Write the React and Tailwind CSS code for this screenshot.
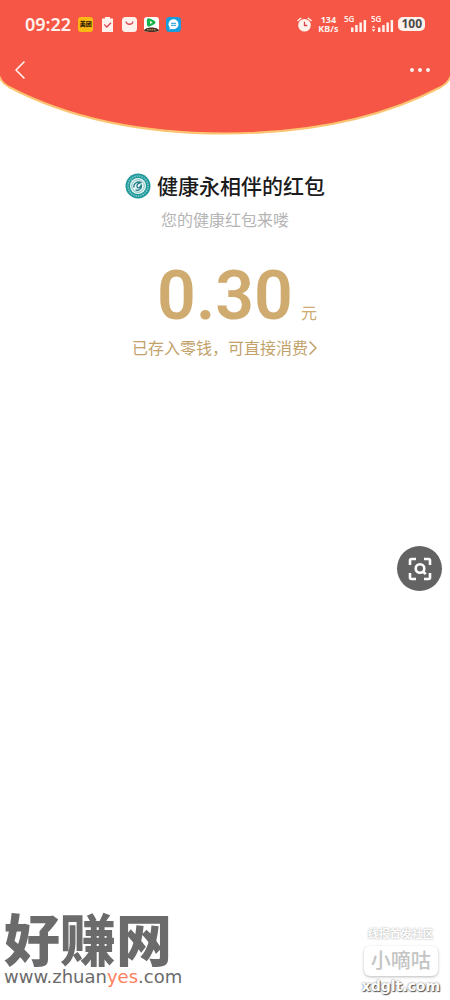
import React from 'react';
import { ChevronLeft } from 'lucide-react';

const MeituanIcon = () => (
  <span className="w-[15px] h-[15px] rounded-[3px] bg-[#fdb913] text-[#332200] text-[6px] leading-[15px] font-black text-center">
    美团
  </span>
);

const TaskIcon = () => (
  <svg className="w-[15px] h-[15px]" viewBox="0 0 15 15" fill="none" aria-hidden="true">
    <path d="M2 1.5h3V0h5v1.5h3V15H2z" fill="#fff1ec" />
    <path d="M4.2 7.4 6.8 10 11 5.8" stroke="#d8454f" strokeWidth="1.3" />
  </svg>
);

const BagIcon = () => (
  <svg className="w-[15px] h-[15px]" viewBox="0 0 15 15" fill="none" aria-hidden="true">
    <rect width="15" height="15" rx="3.5" fill="#fff1ec" />
    <path d="M4.2 5c.4 3 6.2 3 6.6 0" stroke="#d8454f" strokeWidth="1.3" strokeLinecap="round" />
  </svg>
);

const VideoIcon = () => (
  <svg className="w-[15px] h-[15px]" viewBox="0 0 15 15" aria-hidden="true">
    <rect width="15" height="15" rx="3" fill="#fff" />
    <path d="M4.6 1.2c-1.4-.3-1.8.8-1.7 3.8.1 2.8 0 4.9 1.7 4.6C6.5 9.2 11.3 7 11.6 5.4 11.7 3.9 6.5 1.5 4.6 1.2z" fill="#15b34a" />
    <path d="M6 3.8v3.2l2.7-1.6z" fill="#e9ffe9" />
    <path d="M0 13.5C1 9.5 14 9.5 15 13.5c-1 2-14 2-15 0z" fill="#4b3022" />
    <path d="M3 12.8h9" stroke="#d5b07e" strokeWidth="1" strokeDasharray="1.5 .8" />
  </svg>
);

const ChatIcon = () => (
  <svg className="w-[15px] h-[15px]" viewBox="0 0 15 15" aria-hidden="true">
    <rect width="15" height="15" rx="3.5" fill="#189cdb" />
    <circle cx="7.5" cy="7.3" r="5" fill="#fff" />
    <path d="M4 9.5 3.4 12.6 7 11.5z" fill="#fff" />
    <path d="M5 6.3h5M5 8.3h5" stroke="#189cdb" strokeWidth="1" />
  </svg>
);

const AlarmIcon = () => (
  <svg className="w-[15px] h-[15px]" viewBox="0 0 15 15" fill="none" aria-hidden="true">
    <circle cx="7.5" cy="8.2" r="6.3" fill="#fff1ec" />
    <path d="M1 3.5 3.7 1.2M14 3.5l-2.7-2.3" stroke="#fff1ec" strokeWidth="1.5" strokeLinecap="round" />
    <path d="M7.5 4.8v3.7h2.8" stroke="#d8454f" strokeWidth="1.3" />
  </svg>
);

const SignalIcon = ({ data }) => (
  <svg className="w-[23px] h-[24px]" viewBox="0 0 23 24" fill="#fff1ec" aria-hidden="true">
    <text x="0" y="10" fontSize="8" fontWeight="600">5G</text>
    {data && <path d="M2.5 13.5 4.3 15.8H.7zM2.5 20 .7 17.200h3.600z" />}
    <rect x="7" y="15.500" width="2.5" height="4.500" />
    <rect x="11.2" y="13" width="2.5" height="7" />
    <rect x="15.4" y="10.500" width="2.5" height="9.500" />
    <rect x="19.6" y="8" width="2.5" height="12" />
  </svg>
);

const StatusBar = () => (
  <div className="flex items-center justify-between h-12 px-[25px] text-[#fff1ec]">
    <div className="flex items-center gap-[7px]">
      <span className="text-[18px] leading-6 font-semibold">09:22</span>
      <MeituanIcon />
      <TaskIcon />
      <BagIcon />
      <VideoIcon />
      <ChatIcon />
    </div>
    <div className="flex items-center gap-1">
      <AlarmIcon />
      <span className="w-[24px] text-[9px] leading-[9px] font-bold text-center">
        134<br />KB/s
      </span>
      <SignalIcon />
      <SignalIcon data />
      <span className="h-[14px] px-[3px] rounded-[5px] bg-[#fff1ec] text-[#4a4a4a] text-[12px] leading-[14px] font-bold">
        100
      </span>
    </div>
  </div>
);

const Header = () => (
  <header className="relative h-[135px]">
    <svg
      className="absolute inset-0 w-full h-full"
      viewBox="0 0 450 135"
      preserveAspectRatio="none"
      aria-hidden="true"
    >
      <path
        d="M-2-2V72Q0 82 9 87C70 119 145 133.5 225 133.5S380 119 441 87Q450 82 452 72V-2z"
        fill="#f65645"
        stroke="#fcc472"
        strokeWidth="2"
      />
    </svg>
    <div className="relative">
      <StatusBar />
      <div className="flex items-center justify-between h-11 pl-1 pr-5">
        <button type="button" aria-label="返回" className="text-[#fff1ec]">
          <ChevronLeft size={32} strokeWidth={1.3} />
        </button>
        <button type="button" aria-label="更多" className="flex items-center gap-1 h-8">
          <span className="w-1 h-1 rounded-full bg-[#fff1ec]" />
          <span className="w-1 h-1 rounded-full bg-[#fff1ec]" />
          <span className="w-1 h-1 rounded-full bg-[#fff1ec]" />
        </button>
      </div>
    </div>
  </header>
);

const Avatar = () => (
  <svg className="w-[26px] h-[26px] shrink-0" viewBox="0 0 26 26" fill="none" aria-hidden="true">
    <circle cx="13" cy="13" r="12.5" fill="#20999a" />
    <circle cx="13" cy="13" r="10" stroke="#8fd0d0" strokeWidth="1.5" strokeDasharray="1.3 1.1" />
    <circle cx="13" cy="13" r="8" fill="#e8f6f5" />
    <circle cx="13" cy="13" r="6.3" stroke="#83bfc1" strokeWidth="1" />
    <path d="M9 14.5c-1-4 3-6.5 7.5-5-3.5.4-5 2-4.5 4.2.5 2 3.5 1.3 4.5-2.2.6 4-3 7-6 5.2" stroke="#277f8b" strokeWidth="1.3" />
  </svg>
);

const ArrowIcon = () => (
  <svg className="w-[10px] h-4" viewBox="0 0 10 16" fill="none" stroke="currentColor" strokeWidth="1.5" aria-hidden="true">
    <path d="M1.5 1.5 8 8l-6.5 6.5" />
  </svg>
);

const ScanIcon = () => (
  <svg className="w-6 h-6" viewBox="0 0 24 24" fill="none" stroke="#fff" strokeWidth="2.6" aria-hidden="true">
    <path d="M2 8V3.5Q2 2 3.5 2H8M16 2h4.5Q22 2 22 3.5V8M2 16v4.5Q2 22 3.5 22H8M16 22h4.5q1.5 0 1.5-1.5V16" />
    <circle cx="12" cy="11.5" r="4.3" />
    <path d="m15 14.5 2.7 2.7" />
  </svg>
);

const SiteMark = () => (
  <div className="text-[#6b6b6b]">
    <p className="text-[56px] leading-[54px] font-black">好赚网</p>
    <p className="font-['DejaVu_Sans',sans-serif] text-[18px] leading-[22px]">
      www.zhuan<span className="text-[#ff7f5c]">yes</span>.com
    </p>
  </div>
);

const CommunityMark = () => (
  <div className="flex flex-col items-center">
    <p className="text-[11px] leading-[16px] font-bold text-white [text-shadow:0_0_2px_#999]">线报首发社区</p>
    <p className="mt-1 w-[74px] h-[30px] rounded-md bg-white shadow-[0_1px_3px_#bbb] text-center text-[20px] leading-[29px] font-medium text-[#c4c4c4]">
      小嘀咕
    </p>
    <p className="font-['DejaVu_Sans',sans-serif] text-[14px] leading-[20px] font-bold text-white [text-shadow:1px_1px_1px_#555,0_0_2px_#666]">
      xdglt.com
    </p>
  </div>
);

const App = () => {
  return (
    <div className="relative min-h-screen flex flex-col bg-white overflow-hidden font-['Noto_Sans','Noto_Sans_CJK_SC',sans-serif]">
      <Header />

      <main className="flex flex-col items-center pt-9">
        <div className="flex items-center gap-[6px]">
          <Avatar />
          <h1 className="text-[21px] leading-[30px] font-medium text-[#1b1b1b]">健康永相伴的红包</h1>
        </div>
        <p className="mt-[7px] text-[16px] leading-6 text-[#b5b5b5]">您的健康红包来喽</p>

        {/* Amount */}
        <p className="mt-6 pl-6 flex items-baseline gap-2 text-[#cfab70]">
          <span className="font-['Roboto',sans-serif] text-[68px] leading-[80px] font-semibold">0.30</span>
          <span className="text-[16px]">元</span>
        </p>
        <a href="#balance" className="flex items-center text-[16px] leading-6 text-[#c2a26a]">
          已存入零钱，可直接消费
          <ArrowIcon />
        </a>
      </main>

      <footer className="mt-auto flex items-end justify-between pl-1 pr-[10px]">
        <div className="pb-3">
          <SiteMark />
        </div>
        <div className="pb-1">
          <CommunityMark />
        </div>
      </footer>

      {/* Floating image search button */}
      <button
        type="button"
        aria-label="识图"
        className="absolute right-2 top-[546px] w-[45px] h-[45px] rounded-full bg-[#636363] flex items-center justify-center"
      >
        <ScanIcon />
      </button>
    </div>
  );
};

export default App;
